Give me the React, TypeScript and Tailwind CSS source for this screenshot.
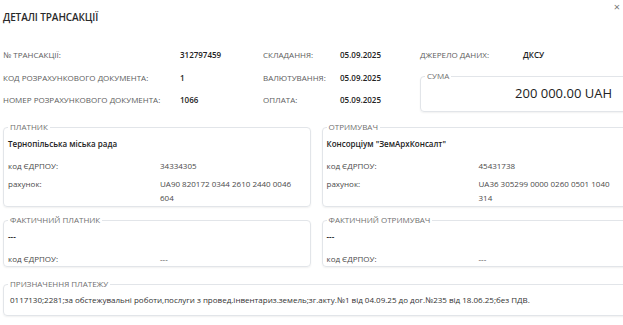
import React from "react";

const Label = ({ children }: { children: React.ReactNode }) => (
  <div className="text-[8px] leading-[22px] text-[#5c5c5c] whitespace-nowrap">{children}</div>
);

const Value = ({ children }: { children: React.ReactNode }) => (
  <div className="text-[8px] leading-[22px] font-semibold text-[#222] whitespace-nowrap">{children}</div>
);

const Box = ({
  title,
  className = "",
  children,
}: {
  title: string;
  className?: string;
  children: React.ReactNode;
}) => (
  <fieldset
    className={`border border-[#e2e5e9] rounded-[4px] shadow-[0_1px_2px_rgba(0,0,0,0.06)] px-[4px] ${className}`}
  >
    <legend className="px-[2px] text-[8px] leading-[10px] text-[#6f6f6f]">{title}</legend>
    {children}
  </fieldset>
);

const Party = ({ name, code, account }: { name: string; code: string; account?: string }) => (
  <div className="text-[8px] leading-[14px]">
    <div className="font-semibold text-[#222] pt-[5px]">{name}</div>
    <div className="grid grid-cols-[152px_1fr] gap-y-[4px] mt-[8px] text-[#4a4a4a]">
      <div>код ЄДРПОУ:</div>
      <div>{code}</div>
      {account && (
        <>
          <div>рахунок:</div>
          <div className="pr-[8px]">{account}</div>
        </>
      )}
    </div>
  </div>
);

export default function App() {
  return (
    <div className="w-[623px] h-[325px] overflow-hidden bg-white font-['Open_Sans',sans-serif]">
      <div className="w-[634px] pl-[3px]">
        <div className="flex justify-between items-start h-[44px]">
          <h1 className="pt-[10px] text-[10px] leading-[14px] font-semibold text-[#2a2a2a] tracking-[-0.1px]">
            ДЕТАЛІ ТРАНСАКЦІЇ
          </h1>
          <span className="mr-[14px] mt-[1px] text-[11px] leading-[12px] text-[#777]">×</span>
        </div>

        <div className="flex">
          <div className="grid grid-cols-[177px_83px_77px_80px]">
            <Label>№ ТРАНСАКЦІЇ:</Label>
            <Value>312797459</Value>
            <Label>СКЛАДАННЯ:</Label>
            <Value>05.09.2025</Value>
            <Label>КОД РОЗРАХУНКОВОГО ДОКУМЕНТА:</Label>
            <Value>1</Value>
            <Label>ВАЛЮТУВАННЯ:</Label>
            <Value>05.09.2025</Value>
            <Label>НОМЕР РОЗРАХУНКОВОГО ДОКУМЕНТА:</Label>
            <Value>1066</Value>
            <Label>ОПЛАТА:</Label>
            <Value>05.09.2025</Value>
          </div>
          <div className="flex-1">
            <div className="grid grid-cols-[103px_1fr]">
              <Label>ДЖЕРЕЛО ДАНИХ:</Label>
              <Value>ДКСУ</Value>
            </div>
            <Box title="СУМА" className="mt-[5px] h-[41px]">
              <div className="text-right pr-[17px] text-[13px] leading-[20px] text-[#222] mt-[2px]">
                200 000.00 UAH
              </div>
            </Box>
          </div>
        </div>

        <div className="grid grid-cols-2 gap-x-[11px] mt-[10px] pr-[5px]">
          <Box title="ПЛАТНИК" className="pb-[1px]">
            <Party name="Тернопільська міська рада" code="34334305" account="UA90 820172 0344 2610 2440 0046 604" />
          </Box>
          <Box title="ОТРИМУВАЧ" className="pb-[1px]">
            <Party name='Консорціум "ЗемАрхКонсалт"' code="45431738" account="UA36 305299 0000 0260 0501 1040 314" />
          </Box>
          <Box title="ФАКТИЧНИЙ ПЛАТНИК" className="mt-[8px]">
            <Party name="---" code="---" />
          </Box>
          <Box title="ФАКТИЧНИЙ ОТРИМУВАЧ" className="mt-[8px]">
            <Party name="---" code="---" />
          </Box>
        </div>

        <Box title="ПРИЗНАЧЕННЯ ПЛАТЕЖУ" className="mt-[12px] pb-[8px] mr-[5px]">
          <div className="pt-[4px] pl-[2px] text-[8px] leading-[14px] text-[#333]">
            0117130;2281;за обстежувальні роботи,послуги з провед.інвентариз.земель;зг.акту.№1 від 04.09.25 до дог.№235 від 18.06.25;без ПДВ.
          </div>
        </Box>
      </div>
    </div>
  );
}
